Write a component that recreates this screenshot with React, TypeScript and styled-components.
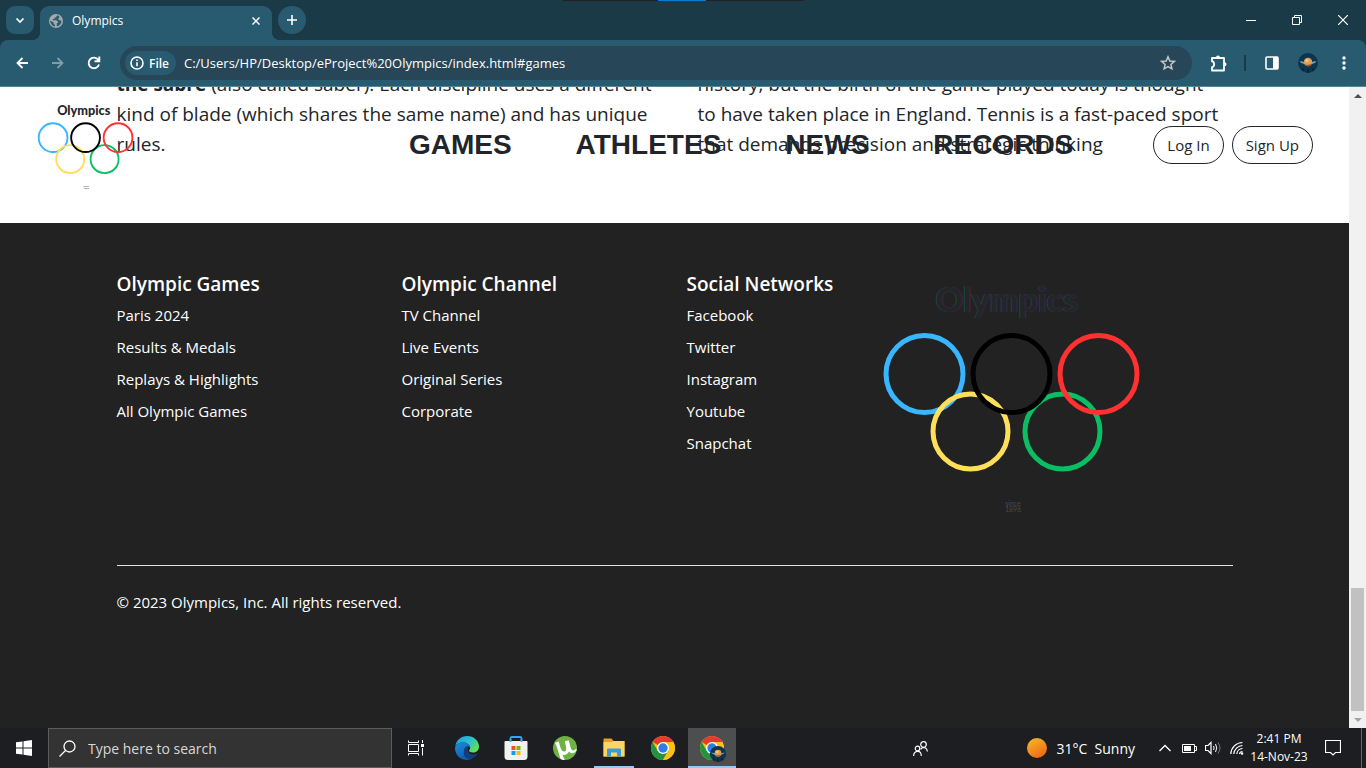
import React from "react";
import styled, { createGlobalStyle, css } from "styled-components";

const UI = `"Open Sans", "Noto Sans", sans-serif`;

const GlobalStyle = createGlobalStyle`
  *, *::before, *::after { box-sizing: border-box; }
  body { margin: 0; background: #222; font-family: ${UI}; color: #212529; }
  button, input { font: inherit; color: inherit; border: 0; padding: 0; background: none; outline: none; }
  a { color: inherit; text-decoration: none; }
  ul { list-style: none; margin: 0; padding: 0; }
  svg { display: block; flex: none; }
`;

const Screen = styled.div`
  display: flex;
  flex-direction: column;
  height: 100vh;
  min-height: 600px;
  overflow: hidden;
`;

/* ---------- browser frame ---------- */

const TabStrip = styled.div`
  position: relative;
  display: flex;
  height: 40px;
  flex: none;
  padding: 6px 0 0 6px;
  background: #1b3a47;
  color: #fff;
`;

const ShareBar = styled.div`
  position: absolute;
  top: 0;
  left: 50%;
  width: 241px;
  height: 1px;
  transform: translateX(-50%);
  background: linear-gradient(90deg, #241f20 96px, #0a7ad8 96px 144px, #241f20 144px);
`;

const StripButton = styled.button<{ $round?: boolean }>`
  display: grid;
  place-items: center;
  width: 28px;
  height: 28px;
  border-radius: ${(p) => (p.$round ? "14px" : "9px")};
  background: #285a70;
`;

const Tab = styled.div`
  position: relative;
  display: flex;
  align-items: center;
  gap: 9px;
  width: 232px;
  height: 34px;
  margin: 0 6px;
  padding: 0 9px 5px;
  border-radius: 9px 9px 0 0;
  background: #285a70;
  font-size: 12px;

  &::before, &::after {
    content: "";
    position: absolute;
    bottom: 0;
    width: 8px;
    height: 8px;
  }
  &::before { right: 100%; background: radial-gradient(circle at 0 0, transparent 8px, #285a70 8px); }
  &::after { left: 100%; background: radial-gradient(circle at 100% 0, transparent 8px, #285a70 8px); }
`;

const TabTitle = styled.span`
  flex: 1;
`;

const CloseTab = styled.button`
  display: grid;
  place-items: center;
  width: 14px;
  height: 16px;
`;

const WindowControls = styled.div`
  display: flex;
  margin-left: auto;
`;

const WindowButton = styled.button`
  display: grid;
  place-items: center;
  width: 46px;
  height: 28px;
`;

const ToolbarBack = styled.div`
  flex: none;
  background: #1b3a47;
`;

const Toolbar = styled.div`
  display: flex;
  align-items: center;
  height: 47px;
  padding: 0 4px;
  border-bottom: 1px solid #56849a;
  border-radius: 8px 8px 0 0;
  background: #285a70;
  color: #fff;
`;

const ToolButton = styled.button<{ $dim?: boolean }>`
  display: grid;
  place-items: center;
  width: 36px;
  height: 34px;
  flex: none;
  color: ${(p) => (p.$dim ? "#7f9dab" : "#fff")};
`;

const Omnibox = styled.div`
  display: flex;
  align-items: center;
  flex: 1;
  height: 34px;
  margin: 0 8px;
  padding: 0 16px 0 5px;
  border-radius: 17px;
  background: #274657;
`;

const FileChip = styled.button`
  display: flex;
  align-items: center;
  gap: 5px;
  width: 51px;
  height: 24px;
  padding-left: 5px;
  border-radius: 12px;
  background: #285a70;
  font-size: 12px;
  font-weight: 600;
`;

const Address = styled.input`
  flex: 1;
  min-width: 0;
  margin-left: 8px;
  font-size: 13px;
`;

const Divider = styled.div`
  width: 2px;
  height: 16px;
  margin: 0 8px;
  background: #1b3a47;
`;

/* ---------- web page ---------- */

const Viewport = styled.div`
  display: flex;
  flex: 1;
  min-height: 0;
`;

const Page = styled.div`
  position: relative;
  display: flex;
  flex: 1;
  flex-direction: column;
  justify-content: flex-end;
  min-width: 0;
  overflow: hidden;
  background: #fff;
`;

const Container = styled.div`
  width: 100%;
  max-width: 1140px;
  margin: 0 auto;
  padding: 0 12px;
`;

const Articles = styled(Container)`
  display: grid;
  grid-template-columns: 1fr 1fr;
  column-gap: 46px;
  padding-bottom: 64px;
`;

const Article = styled.p`
  margin: 0;
  font-size: 19px;
  line-height: 30px;
  white-space: nowrap;
`;

const SiteHeader = styled.header`
  position: absolute;
  inset: 0 0 auto;
  z-index: 1;
  display: flex;
  align-items: center;
  height: 116px;
  padding: 0 36px 0 29px;
`;

const SiteNav = styled.nav`
  display: flex;
  gap: 64px;
  margin: 0 80px 0 auto;
  font: bold 28px/42px "Liberation Sans", Arial, sans-serif;
`;

const Account = styled.div`
  display: flex;
  gap: 8px;
`;

const Pill = styled.button`
  height: 38px;
  padding: 0 13px;
  border: 1px solid #212529;
  border-radius: 19px;
  font-size: 15px;
`;

const Footer = styled.footer`
  flex: none;
  background: #222;
  color: #fff;
  font-size: 15px;
`;

const FooterColumns = styled(Container)`
  display: grid;
  grid-template-columns: 285fr 285fr 173fr 373fr;
  padding-top: 37px;
  height: 342px;
`;

const FooterColumn = styled.section`
  padding-top: 12px;
  white-space: nowrap;
`;

const FooterTitle = styled.h5`
  margin: 0 0 3px;
  font-size: 19px;
  line-height: 24px;
  font-weight: 600;
`;

const FooterLink = styled.li`
  line-height: 32px;
`;

const Legal = styled(Container)`
  height: 163px;

  p {
    margin: 0;
    padding-top: 24px;
    border-top: 1px solid #dee2e6;
    line-height: 24px;
  }
`;

const ScrollTrack = styled.div`
  display: flex;
  flex-direction: column;
  align-items: center;
  width: 17px;
  background: #f1f1f1;
`;

const ScrollArrow = styled.div`
  display: grid;
  place-items: center;
  width: 17px;
  height: 17px;
`;

const ScrollThumb = styled.div`
  width: 13px;
  height: 123px;
  margin-top: auto;
  background: #c1c1c1;
`;

/* ---------- taskbar ---------- */

const Taskbar = styled.div`
  display: flex;
  align-items: stretch;
  flex: none;
  height: 40px;
  background: #1c1e21;
  color: #fff;
`;

const TaskSearch = styled.label`
  display: flex;
  align-items: center;
  gap: 12px;
  width: 344px;
  padding-left: 10px;
  border: 1px solid #5c5c5c;
  background: #333;
  font-size: 14px;

  input { flex: 1; min-width: 0; }
  input::placeholder { color: #d8d8d8; opacity: 1; }
`;

const TaskApps = styled.div`
  display: flex;
  gap: 1px;
  margin-left: 3px;
`;

const TaskButton = styled.button<{ $open?: boolean; $active?: boolean }>`
  position: relative;
  display: grid;
  place-items: center;
  width: 48px;
  background: ${(p) => (p.$active ? "#4c4e50" : "none")};

  ${(p) =>
    (p.$open || p.$active) &&
    css`
      &::after {
        content: "";
        position: absolute;
        bottom: 0;
        left: ${p.$active ? 0 : 4}px;
        right: ${p.$active ? 0 : 4}px;
        height: 2px;
        background: #8ecbf8;
      }
    `}
`;

const Tray = styled.div`
  display: flex;
  align-items: center;
  margin-left: auto;
`;

const Weather = styled.button`
  display: flex;
  align-items: center;
  gap: 9px;
  margin: 0 18px 0 95px;
  font-size: 14px;
  white-space: pre;
`;

const TrayButton = styled.button`
  display: grid;
  place-items: center;
  width: 24px;
  height: 40px;
`;

const Clock = styled.button`
  width: 60px;
  font-size: 12px;
  line-height: 18px;
  white-space: nowrap;
  text-align: center;
`;

const ShowDesktop = styled.button`
  width: 5px;
  height: 40px;
  margin-left: 4px;
  border-left: 1px solid #66686a;
`;

/* ---------- drawings ---------- */

function RingsLogo({ width, dark }: { width: number; dark?: boolean }) {
  const word = { textAnchor: "middle" as const, fontFamily: "Lato, sans-serif", fontWeight: 900, fontSize: 34 };
  const since = { textAnchor: "middle" as const, fontFamily: "Lato, sans-serif", fontSize: 7, fill: dark ? "#4a4a4a" : "#444" };
  return (
    <svg width={width} height={Math.round(width * 0.9)} viewBox="0 0 300 270" role="img" aria-label="Olympics">
      {dark && <text {...word} x={146} y={52} fill="#234a50" aria-hidden="true">Olympics</text>}
      {dark && <text {...word} x={147.4} y={52} fill="#4a2852" aria-hidden="true">Olympics</text>}
      <text {...word} x={146.7} y={52} fill={dark ? "#222628" : "#25282c"}>Olympics</text>
      <g fill="none" strokeWidth="5">
        <circle cx="64.500" cy="114" r="38.500" stroke="#38b6ff" />
        <circle cx="202.500" cy="171.500" r="37.500" stroke="#0abf63" />
        <circle cx="110.500" cy="171.500" r="37.500" stroke="#ffde59" />
        <circle cx="151.500" cy="114" r="38.500" stroke="#000" />
        <circle cx="238.500" cy="114" r="38.500" stroke="#ff3131" />
      </g>
      <text {...since} x={153} y={246}>since</text>
      <text {...since} x={153} y={252}>1896</text>
    </svg>
  );
}

const Stroke = ({ size = 16, w = 2, children }: { size?: number; w?: number; children: React.ReactNode }) => (
  <svg width={size} height={size} viewBox={`0 0 ${size} ${size}`} fill="none" stroke="currentColor" strokeWidth={w}>
    {children}
  </svg>
);

const Avatar = ({ size }: { size: number }) => (
  <svg width={size} height={size} viewBox="0 0 20 20">
    <circle cx="10" cy="10" r="10" fill="#0c3550" />
    <circle cx="10" cy="9" r="4.300" fill="#e0a050" />
    <circle cx="9" cy="7.500" r="1.500" fill="#f2c98a" />
    <path d="M6.500 11Q10 13 13.500 10.500Q12 13.500 9.500 13.300T6.500 11Z" fill="#93522b" />
    <path d="M1.500 8.500Q4 8 6 9.200L6.500 11Q3.500 10.500 1.500 8.500ZM18.500 8.500Q16 8 14 9.200L13.500 11Q16.500 10.500 18.500 8.500Z" fill="#7ba5b5" />
    <path d="M5 18v-3M10 20v-4M15 18v-3" stroke="#141c2b" strokeWidth="1.500" />
  </svg>
);

const ChromeLogo = () => (
  <svg width="24" height="24" viewBox="0 0 24 24">
    <circle cx="12" cy="12" r="12" fill="#fbc116" />
    <path d="M12 12L1.610 6A12 12 0 0 1 22.390 6Z" fill="#e33b2e" />
    <path d="M1.610 6A12 12 0 0 0 12 24L17.200 15L12 12L6.800 15Z" fill="#229342" />
    <path d="M12 6H22.390A12 12 0 0 1 12 24L17.200 15Z" fill="#fbc116" />
    <circle cx="12" cy="12" r="6" fill="#fff" />
    <circle cx="12" cy="12" r="4.700" fill="#2f7de9" />
  </svg>
);

const EdgeLogo = () => (
  <svg width="24" height="24" viewBox="0 0 24 24">
    <defs>
      <linearGradient id="edgeTop" x1="0" y1="0" x2="1" y2="0.600">
        <stop offset="0" stopColor="#1f9be0" />
        <stop offset="0.550" stopColor="#2bbfd0" />
        <stop offset="1" stopColor="#5fdf58" />
      </linearGradient>
      <linearGradient id="edgeLow" x1="0" y1="0" x2="0.600" y2="1">
        <stop offset="0" stopColor="#1b8fdd" />
        <stop offset="1" stopColor="#0f57ad" />
      </linearGradient>
    </defs>
    <path d="M0.300 10.500C1 4.500 6 0 12 0C19 0 24 5 24 10.500C24 14.500 21 16.500 18 16.500C15.500 16.500 14 15.700 14 14.800C14 14 15.200 13.500 15.200 11.500C15.200 8.500 11.500 6.500 8 6.500C4 6.500 1 8.500 0.300 10.500Z" fill="url(#edgeTop)" />
    <path d="M0 12C0.500 8.500 4 6.500 8 6.500C11.500 6.500 15.200 8.500 15.200 11.500C13 9.500 9.500 11 9.200 14.500C9 19 13.500 21.800 19 20.200C17.500 22.500 14.500 24 12 24C5 24 0 18.500 0 12Z" fill="url(#edgeLow)" />
    <path d="M9.200 14.500C9.500 11 12 9.800 14 10.500C11.500 12 12.500 18.500 18.500 18.500C20.300 18.500 21.500 17.700 22 17.400C22.700 17.100 22.500 18 22.100 18.500C20.500 21.500 16 23.500 12.500 22.500C8 20.800 8.500 16.500 9.200 14.500Z" fill="#123f78" />
  </svg>
);

const StoreLogo = () => (
  <svg width="24" height="24" viewBox="0 0 24 24">
    <path d="M6.500 6V2.500Q6.500 1 8 1H16Q17.500 1 17.500 2.500V6" fill="none" stroke="#27aee5" strokeWidth="1.800" />
    <path d="M1.500 5H22.500Q23.500 5 23.500 6V20.500Q23.500 24 20 24H4Q0.500 24 0.500 20.500V6Q0.500 5 1.500 5Z" fill="#f1f1f1" />
    <path d="M6.500 3V6M17.500 3V6" stroke="#27aee5" strokeWidth="1.800" />
    <path d="M7.500 10h4v4h-4z" fill="#ee5122" />
    <path d="M12.500 10h4v4h-4z" fill="#7db900" />
    <path d="M7.500 15h4v4h-4z" fill="#0aa2ec" />
    <path d="M12.500 15h4v4h-4z" fill="#fdb813" />
  </svg>
);

const TorrentLogo = () => (
  <svg width="24" height="24" viewBox="0 0 24 24">
    <circle cx="12" cy="12" r="12" fill="#6fb244" />
    <path d="M2 6.800L5.800 5.600C7 9.500 7.700 16 11.500 15.500C14.500 15 12.800 9 11.800 5.200L15.800 4.200C17 8.500 17.500 13.500 19.500 14.300C20.500 14.700 22 14 23.500 12.500V14.500C21.500 17.500 18 18.500 16 15.500C14.500 18.500 11.500 19.500 9.500 18.500C10 20.500 10.800 22 11.800 24C10 24 8.500 23.500 7.500 22.700C5.500 17 4.500 11.500 2 6.800Z" fill="#fff" />
  </svg>
);

const FolderLogo = () => (
  <svg width="22" height="20" viewBox="0 0 22 20">
    <path d="M0.500 1Q0.500 0.500 1 0.500H8.500L10.500 3H21Q21.500 3 21.500 3.500V18.500H0.500Z" fill="#e6a21c" />
    <path d="M0.500 4H8.500L10.500 3H21.500V18.500H0.500Z" fill="#fdd562" />
    <path d="M4 18.500V11.500Q4 10.500 5 10.500H17Q18 10.500 18 11.500V18.500H14V14.500H8V18.500Z" fill="#3f9add" />
  </svg>
);

/* ---------- content ---------- */

const footerColumns = [
  { title: "Olympic Games", links: ["Paris 2024", "Results & Medals", "Replays & Highlights", "All Olympic Games"] },
  { title: "Olympic Channel", links: ["TV Channel", "Live Events", "Original Series", "Corporate"] },
  { title: "Social Networks", links: ["Facebook", "Twitter", "Instagram", "Youtube", "Snapchat"] },
];

function BrowserFrame() {
  return (
    <>
      <TabStrip>
        <ShareBar />
        <StripButton aria-label="Search tabs"><Stroke size={10}><path d="M1.500 3.500l3.500 3.500 3.500-3.500" strokeWidth="1.700" /></Stroke></StripButton>
        <Tab>
          <svg width="14" height="14" viewBox="0 0 14 14">
            <circle cx="7" cy="7" r="7" fill="#a5a9ac" />
            <path d="M8.500 1.300L7.300 2.500V3.500H5.500V5H3.800V6.300H7.500L9 7.800V9H7.800V12.500C10.500 12 12.500 9.800 12.500 7L11 6.300L9.800 6L9 4.800L10.300 4V2.500ZM1.400 6.500C1.200 9.500 3.200 12 6 12.600V11L4.600 9.800V8.500Z" fill="#285a70" />
          </svg>
          <TabTitle>Olympics</TabTitle>
          <CloseTab aria-label="Close tab"><Stroke size={8}><path d="M0.500 0.500l7 7M7.500 0.500l-7 7" strokeWidth="1.500" /></Stroke></CloseTab>
        </Tab>
        <StripButton $round aria-label="New tab"><Stroke size={10}><path d="M5 0v10M0 5h10" strokeWidth="1.600" /></Stroke></StripButton>
        <WindowControls>
          <WindowButton aria-label="Minimize"><Stroke size={10} w={1}><path d="M0 5.500h10" /></Stroke></WindowButton>
          <WindowButton aria-label="Restore"><Stroke size={10} w={1}><path d="M0.500 2.500h7v7h-7zM2.500 2.500v-2h7v7h-2" /></Stroke></WindowButton>
          <WindowButton aria-label="Close"><Stroke size={10} w={1}><path d="M0 0l10 10M10 0L0 10" strokeWidth="1.200" /></Stroke></WindowButton>
        </WindowControls>
      </TabStrip>
      <ToolbarBack>
        <Toolbar>
          <ToolButton aria-label="Back"><Stroke size={12}><path d="M12 6H1.500M6.500 1L1.500 6l5 5" strokeWidth="1.800" /></Stroke></ToolButton>
          <ToolButton $dim aria-label="Forward"><Stroke size={12}><path d="M0 6h10.500M5.500 1l5 5-5 5" strokeWidth="1.800" /></Stroke></ToolButton>
          <ToolButton aria-label="Reload">
            <Stroke size={14}><path d="M12 8.500A5.300 5.300 0 1 1 11 3.500L12 5M12.300 0.500V5.300H7.500" strokeWidth="1.900" /></Stroke>
          </ToolButton>
          <Omnibox>
            <FileChip>
              <Stroke size={14}><circle cx="7" cy="7" r="6" strokeWidth="1.600" /><path d="M7 6.300v4M7 3.500v1.600" strokeWidth="1.600" /></Stroke>
              File
            </FileChip>
            <Address aria-label="Address" readOnly value="C:/Users/HP/Desktop/eProject%20Olympics/index.html#games" />
            <svg width="16" height="16" viewBox="0 0 16 16" fill="none" stroke="#c3c6ca" strokeWidth="1.500">
              <path d="M8 1.800L9.800 6L14.300 6.400L10.900 9.400L11.900 13.800L8 11.500L4.100 13.800L5.100 9.400L1.700 6.400L6.200 6Z" />
            </svg>
          </Omnibox>
          <ToolButton aria-label="Extensions">
            <svg width="17" height="17" viewBox="0 0 17 17" fill="none" stroke="#fff" strokeWidth="1.800">
              <path d="M2 3H14V15.500H2V12.200C4.800 12 4.800 6.500 2 6.300Z" strokeLinejoin="round" />
              <path d="M6 2.500a2 2 0 0 1 4 0zM14.500 7.200a2 2 0 0 1 0 4z" fill="#fff" stroke="none" />
            </svg>
          </ToolButton>
          <Divider />
          <ToolButton aria-label="Side panel">
            <Stroke size={14}><rect x="1" y="1" width="12" height="12" rx="1" strokeWidth="1.600" /><path d="M8 1h5v12H8z" fill="currentColor" stroke="none" /></Stroke>
          </ToolButton>
          <ToolButton aria-label="Profile"><Avatar size={20} /></ToolButton>
          <ToolButton aria-label="Menu">
            <svg width="4" height="14" viewBox="0 0 4 14" fill="#fff"><circle cx="2" cy="2" r="1.700" /><circle cx="2" cy="7" r="1.700" /><circle cx="2" cy="12" r="1.700" /></svg>
          </ToolButton>
        </Toolbar>
      </ToolbarBack>
    </>
  );
}

function WebPage() {
  return (
    <Page>
      <SiteHeader>
        <a href="#home"><RingsLogo width={112} /></a>
        <SiteNav>
          <a href="#games">GAMES</a>
          <a href="#athletes">ATHLETES</a>
          <a href="#news">NEWS</a>
          <a href="#records">RECORDS</a>
        </SiteNav>
        <Account>
          <Pill>Log In</Pill>
          <Pill>Sign Up</Pill>
        </Account>
      </SiteHeader>
      <Articles as="main">
        <Article>
          <b>the sabre</b> (also called saber). Each discipline uses a different<br />
          kind of blade (which shares the same name) and has unique<br />
          rules.
        </Article>
        <Article>
          history, but the birth of the game played today is thought<br />
          to have taken place in England. Tennis is a fast-paced sport<br />
          that demands precision and strategic thinking
        </Article>
      </Articles>
      <Footer>
        <FooterColumns>
          {footerColumns.map((column) => (
            <FooterColumn key={column.title}>
              <FooterTitle>{column.title}</FooterTitle>
              <ul>
                {column.links.map((link) => (
                  <FooterLink key={link}><a href="#footer">{link}</a></FooterLink>
                ))}
              </ul>
            </FooterColumn>
          ))}
          <RingsLogo width={300} dark />
        </FooterColumns>
        <Legal><p>© 2023 Olympics, Inc. All rights reserved.</p></Legal>
      </Footer>
    </Page>
  );
}

function WindowsTaskbar() {
  return (
    <Taskbar>
      <TaskButton aria-label="Start">
        <svg width="16" height="16" viewBox="0 0 16 16" fill="#fff">
          <path d="M0 2.300L6.500 1.400V7.500H0ZM7.500 1.200L16 0V7.500H7.500ZM0 8.500H6.500V14.600L0 13.700ZM7.500 8.500H16V16L7.500 14.800Z" />
        </svg>
      </TaskButton>
      <TaskSearch>
        <Stroke size={17} w={1}><circle cx="10.500" cy="6.500" r="5.500" strokeWidth="1.300" /><path d="M6.500 10.500L0.500 16.500" strokeWidth="1.300" /></Stroke>
        <input placeholder="Type here to search" aria-label="Type here to search" />
      </TaskSearch>
      <TaskButton aria-label="Task view">
        <Stroke size={16} w={1}>
          <path d="M0.500 0.500v2h10v-2M0.500 15.500v-2h10v2M0.500 4.500h10v7h-10zM14.500 0v3M14.500 8v7.500" />
          <path d="M13 4h3v3h-3z" fill="currentColor" stroke="none" />
        </Stroke>
      </TaskButton>
      <TaskApps>
        <TaskButton aria-label="Edge"><EdgeLogo /></TaskButton>
        <TaskButton aria-label="Store"><StoreLogo /></TaskButton>
        <TaskButton aria-label="uTorrent"><TorrentLogo /></TaskButton>
        <TaskButton $open aria-label="File Explorer"><FolderLogo /></TaskButton>
        <TaskButton aria-label="Chrome"><ChromeLogo /></TaskButton>
        <TaskButton $active aria-label="Chrome, Olympics"><ProfiledChrome /></TaskButton>
      </TaskApps>
      <Tray>
        <TrayButton aria-label="People">
          <Stroke size={15} w={1}>
            <circle cx="10.500" cy="3.500" r="2.800" strokeWidth="1.200" />
            <circle cx="4.500" cy="7.500" r="2.300" strokeWidth="1.200" />
            <path d="M0.600 15Q0.800 10.500 4.500 10.300T8.300 15M7.600 8.300Q9 6.500 10.500 6.500Q14 6.700 14.400 10.500" strokeWidth="1.200" />
          </Stroke>
        </TrayButton>
        <Weather>
          <svg width="20" height="20" viewBox="0 0 20 20">
            <defs>
              <linearGradient id="sun" x1="0.200" y1="0" x2="0.800" y2="1">
                <stop offset="0" stopColor="#f6b62c" />
                <stop offset="1" stopColor="#ee6410" />
              </linearGradient>
            </defs>
            <circle cx="10" cy="10" r="10" fill="url(#sun)" />
          </svg>
          {"31°C  Sunny"}
        </Weather>
        <TrayButton aria-label="Show hidden icons"><Stroke size={12} w={1}><path d="M0.500 9L6 3.500 11.500 9" strokeWidth="1.300" /></Stroke></TrayButton>
        <TrayButton aria-label="Battery">
          <svg width="15" height="9" viewBox="0 0 15 9" fill="none" stroke="#fff"><path d="M0.500 0.500h12v8h-12zM12.500 2.500h2v4h-2" /><path d="M2 2h7v5H2z" fill="#fff" stroke="none" /></svg>
        </TrayButton>
        <TrayButton aria-label="Volume">
          <Stroke size={16} w={1}>
            <path d="M0.500 5.500h2.500L6 2.500v11L3 10.500H0.500z" strokeWidth="1.200" />
            <path d="M8.500 6Q9.800 8 8.500 10M10.500 4Q13 8 10.500 12" />
            <path d="M13 2.500Q17 8 13 13.500" stroke="#777" />
          </Stroke>
        </TrayButton>
        <TrayButton aria-label="Network">
          <Stroke size={14} w={1}>
            <path d="M0.800 13A12 12 0 0 1 12.500 1.500M3.800 13A9 9 0 0 1 12.500 4.500M6.800 13A6 6 0 0 1 12.500 7.500M9.500 13A3 3 0 0 1 12.500 10.500" strokeWidth="1.200" />
            <circle cx="12" cy="12.500" r="1.300" fill="currentColor" stroke="none" />
          </Stroke>
        </TrayButton>
        <Clock>2:41 PM<br />14-Nov-23</Clock>
        <TaskButton aria-label="Notifications">
          <Stroke size={16} w={1}><path d="M0.500 0.500h15v12h-5L8 15l-2.500-2.500h-5z" strokeWidth="1.200" /></Stroke>
        </TaskButton>
        <ShowDesktop aria-label="Show desktop" />
      </Tray>
    </Taskbar>
  );
}

const BadgeWrap = styled.span`
  position: relative;

  > :last-child { position: absolute; right: -2px; bottom: -2px; }
`;

function ProfiledChrome() {
  return (
    <BadgeWrap>
      <ChromeLogo />
      <Avatar size={16} />
    </BadgeWrap>
  );
}

export default function App() {
  return (
    <Screen>
      <GlobalStyle />
      <BrowserFrame />
      <Viewport>
        <WebPage />
        <ScrollTrack aria-hidden="true">
          <ScrollArrow><svg width="8" height="4" viewBox="0 0 8 4"><path d="M0 4L4 0l4 4z" fill="#505050" /></svg></ScrollArrow>
          <ScrollThumb />
          <ScrollArrow><svg width="8" height="4" viewBox="0 0 8 4"><path d="M0 0l4 4 4-4z" fill="#a3a3a3" /></svg></ScrollArrow>
        </ScrollTrack>
      </Viewport>
      <WindowsTaskbar />
    </Screen>
  );
}
